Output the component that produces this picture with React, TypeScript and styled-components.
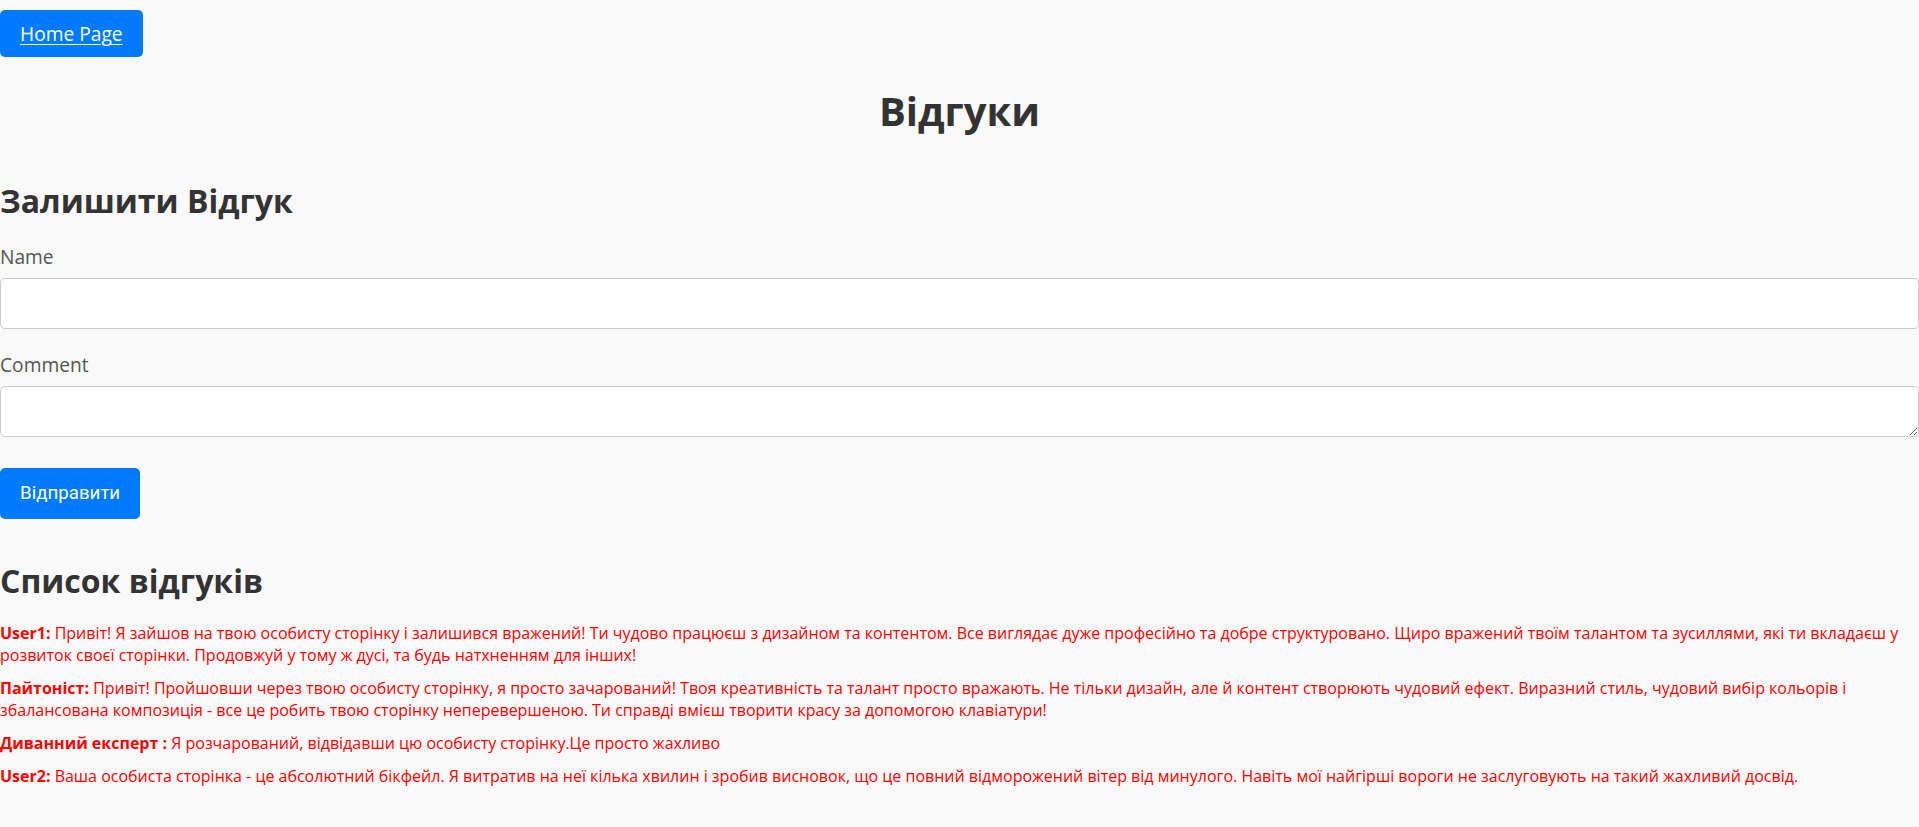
import React from "react";
import styled, { createGlobalStyle } from "styled-components";

const GlobalStyle = createGlobalStyle`
  html, body {
    margin: 0;
    padding: 0;
    background: #f9f9f9;
    font-family: "Open Sans", "Liberation Sans", sans-serif;
    color: #333;
  }
  * { box-sizing: border-box; }
`;

const Page = styled.div`
  display: flex;
  flex-direction: column;
  align-items: stretch;
  padding-top: 10px;
  padding-bottom: 40px;
`;

const TopBar = styled.nav`
  display: flex;
`;

const HomeLink = styled.a`
  display: inline-block;
  background: #007bff;
  color: #fff;
  font-family: "Open Sans", sans-serif;
  font-size: 19.2px;
  line-height: 27px;
  padding: 10px 20px;
  border-radius: 5px;
  text-decoration: underline;
  text-underline-offset: 3px;
  text-decoration-thickness: 1px;
`;

const Title = styled.h1`
  margin: 30px 0 0;
  text-align: center;
  font-size: 40px;
  line-height: 48px;
  font-weight: 700;
  color: #333;
`;

const SectionTitle = styled.h2<{ $top: number }>`
  margin: ${(p) => p.$top}px 0 0;
  font-size: 32px;
  line-height: 40px;
  font-weight: 700;
  color: #333;
`;

const Form = styled.form`
  display: flex;
  flex-direction: column;
  margin-top: 22.5px;
`;

const Label = styled.label`
  font-size: 19.2px;
  line-height: 26px;
  color: #555;
  margin-bottom: 8px;
`;

const fieldCss = `
  width: 100%;
  height: 51px;
  border: 1px solid #ccc;
  border-radius: 5px;
  background: #fff;
  font-family: "Open Sans", sans-serif;
  font-size: 16px;
  padding: 10px;
  margin: 0 0 23px;
  outline: none;
`;

const TextInput = styled.input`
  ${fieldCss}
`;

const TextArea = styled.textarea`
  ${fieldCss}
  display: block;
  margin-bottom: 31.5px;
`;

const SendButton = styled.button`
  align-self: flex-start;
  background: #007bff;
  color: #fff;
  border: none;
  border-radius: 5px;
  font-family: Roboto, "Segoe UI", Arial, sans-serif;
  font-size: 18.7px;
  line-height: 23px;
  height: 51px;
  padding: 0 20px;
  cursor: pointer;
`;

const CommentList = styled.div`
  display: flex;
  flex-direction: column;
  gap: 11px;
  margin-top: 21.5px;
`;

const Comment = styled.p`
  margin: 0;
  color: #ff0000;
  font-size: 16px;
  line-height: 22px;
`;

const Author = styled.strong`
  font-weight: 700;
`;

const comments = [
  {
    author: "User1:",
    text: "Привіт! Я зайшов на твою особисту сторінку і залишився вражений! Ти чудово працюєш з дизайном та контентом. Все виглядає дуже професійно та добре структуровано. Щиро вражений твоїм талантом та зусиллями, які ти вкладаєш у розвиток своєї сторінки. Продовжуй у тому ж дусі, та будь натхненням для інших!",
  },
  {
    author: "Пайтоніст:",
    text: "Привіт! Пройшовши через твою особисту сторінку, я просто зачарований! Твоя креативність та талант просто вражають. Не тільки дизайн, але й контент створюють чудовий ефект. Виразний стиль, чудовий вибір кольорів і збалансована композиція - все це робить твою сторінку неперевершеною. Ти справді вмієш творити красу за допомогою клавіатури!",
  },
  {
    author: "Диванний експерт :",
    text: "Я розчарований, відвідавши цю особисту сторінку.Це просто жахливо",
  },
  {
    author: "User2:",
    text: "Ваша особиста сторінка - це абсолютний бікфейл. Я витратив на неї кілька хвилин і зробив висновок, що це повний відморожений вітер від минулого. Навіть мої найгірші вороги не заслуговують на такий жахливий досвід.",
  },
];

export default function App() {
  return (
    <>
      <GlobalStyle />
      <Page>
        <TopBar>
          <HomeLink href="#">Home Page</HomeLink>
        </TopBar>
        <Title>Відгуки</Title>
        <SectionTitle $top={46}>Залишити Відгук</SectionTitle>
        <Form onSubmit={(e) => e.preventDefault()}>
          <Label htmlFor="name">Name</Label>
          <TextInput id="name" type="text" />
          <Label htmlFor="comment">Comment</Label>
          <TextArea id="comment" />
          <SendButton type="submit">Відправити</SendButton>
        </Form>
        <SectionTitle $top={41.5}>Список відгуків</SectionTitle>
        <CommentList>
          {comments.map((c) => (
            <Comment key={c.author}>
              <Author>{c.author}</Author> {c.text}
            </Comment>
          ))}
        </CommentList>
      </Page>
    </>
  );
}
